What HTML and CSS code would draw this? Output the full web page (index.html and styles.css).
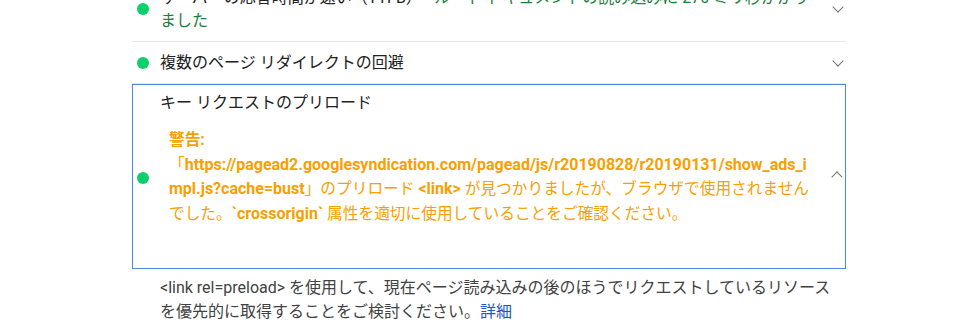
FILE: index.html
```html
<!DOCTYPE html>
<html lang="ja">
<head>
    <meta charset="UTF-8">
    <title>Lighthouse audits</title>
    <link rel="stylesheet" href="styles.css">
</head>
<body>

<div class="audits">
    <div class="audit">
        <span class="dot"></span>
        <div class="title">サーバーの応答時間が速い（TTFB） <span class="value">- ルート ドキュメントの読み込みに 270 ミリ秒かかりました</span></div>
        <span class="chevron down"></span>
    </div>
    <div class="audit">
        <span class="dot"></span>
        <div class="title">複数のページ リダイレクトの回避</div>
        <span class="chevron down"></span>
    </div>
    <div class="audit open">
        <span class="dot"></span>
        <div class="title">
            キー リクエストのプリロード
            <div class="warnings">
                <div class="warn-head">警告:</div>
                「<b>https://pagead2.googlesyndication.com/pagead/js/r20190828/r20190131/show_ads_impl.js?cache=bust</b>」のプリロード <b>&lt;link&gt;</b> が見つかりましたが、ブラウザで使用されませんでした。<b>`crossorigin`</b> 属性を適切に使用していることをご確認ください。
            </div>
        </div>
        <span class="chevron up"></span>
    </div>
    <div class="desc">
        &lt;link rel=preload&gt; を使用して、現在ページ読み込みの後のほうでリクエストしているリソースを優先的に取得することをご検討ください。<a href="#">詳細</a>
    </div>
</div>

</body>
</html>
```

FILE: styles.css
```css
/* lighthouse audit list, zoomed */
body{
    margin: 0;
    background: #fff;
    font-family: Roboto, "Noto Sans CJK JP", sans-serif;
    font-size: 16px;
    color: #212121;
}

.audits{
    width: 714px;
    margin: -23px 0 0 132px;
}

.audit{
    display: flex;
    align-items: center;
    padding: 9px 0;
    border-bottom: 1px solid #e8e8e8;
    line-height: 23px;
}

.dot{
    flex: none;
    width: 12px;
    height: 12px;
    margin: 0 11px 0 5px;
    border-radius: 50%;
    background: #0cce6b;
}

.title{
    flex: 1;
    min-width: 0;
    margin-right: 14px;
}
.value{
    color: #188038;
}

.chevron{
    flex: none;
    width: 7px;
    height: 7px;
    margin-right: 4px;
    border-right: 1.5px solid #757575;
    border-bottom: 1.5px solid #757575;
}
.chevron.down{
    transform: translateY(-2px) rotate(45deg);
}
.chevron.up{
    transform: translateY(-3px) rotate(-135deg);
}

.audit.open{
    border: 1px solid #4a86e8;
    padding: 6px 0 0;
}
.audit.open .dot{
    margin-top: -3px;
    margin-left: 4px;
}
.audit.open .title{
    margin-right: 15.5px;
}

.warnings{
    margin: 14px 0 42px 9px;
    color: #f9a000;
    font-size: 15.7px;
    line-height: 24.5px;
    word-break: break-all;
}
.warn-head, .warnings b{
    font-weight: bold;
}
.warnings b{
    font-size: 16px;
}

.desc{
    padding: 7px 4px 0 28px;
    line-height: 24px;
    color: #424242;
}
.desc a{
    color: #1a56c4;
    text-decoration: none;
}
```
